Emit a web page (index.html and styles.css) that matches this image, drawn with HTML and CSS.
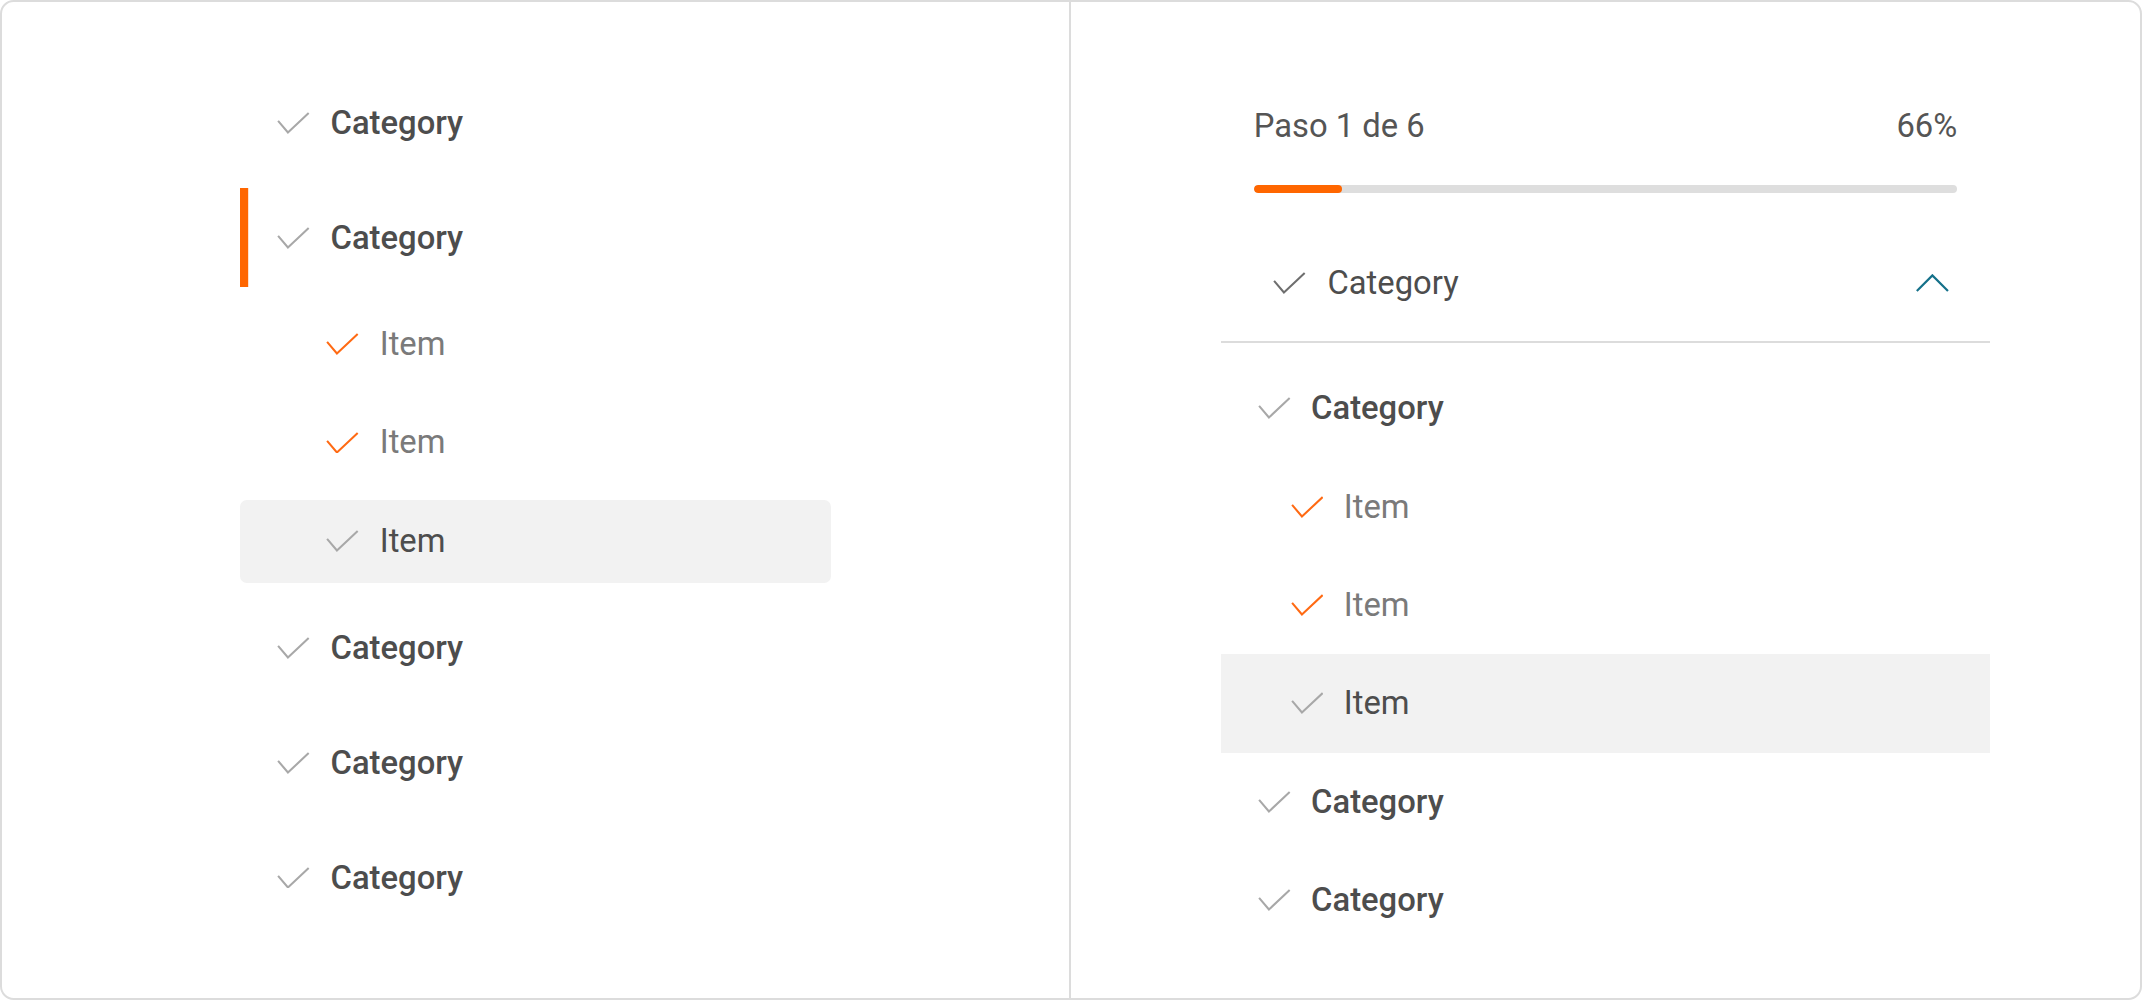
FILE: index.html
```html
<!DOCTYPE html>
<html lang="es">
<head>
<meta charset="utf-8">
<title>Navigation</title>
<link rel="stylesheet" href="styles.css">
</head>
<body>
<div class="frame">
  <section class="pane pane-left">
    <ul class="nav">
      <li class="row cat"><svg class="check" viewBox="0 0 24 16"><polyline points="0.8,6.5 8,15 23.2,0.8"/></svg><span>Category</span></li>
      <li class="row cat active"><svg class="check" viewBox="0 0 24 16"><polyline points="0.8,6.5 8,15 23.2,0.8"/></svg><span>Category</span></li>
      <li class="row item done"><svg class="check" viewBox="0 0 24 16"><polyline points="0.8,6.5 8,15 23.2,0.8"/></svg><span>Item</span></li>
      <li class="row item done"><svg class="check" viewBox="0 0 24 16"><polyline points="0.8,6.5 8,15 23.2,0.8"/></svg><span>Item</span></li>
      <li class="row item current"><svg class="check" viewBox="0 0 24 16"><polyline points="0.8,6.5 8,15 23.2,0.8"/></svg><span>Item</span></li>
      <li class="row cat"><svg class="check" viewBox="0 0 24 16"><polyline points="0.8,6.5 8,15 23.2,0.8"/></svg><span>Category</span></li>
      <li class="row cat"><svg class="check" viewBox="0 0 24 16"><polyline points="0.8,6.5 8,15 23.2,0.8"/></svg><span>Category</span></li>
      <li class="row cat"><svg class="check" viewBox="0 0 24 16"><polyline points="0.8,6.5 8,15 23.2,0.8"/></svg><span>Category</span></li>
    </ul>
  </section>
  <section class="pane pane-right">
    <div class="mobile">
      <div class="progress-head"><span>Paso 1 de 6</span><span>66%</span></div>
      <div class="bar"><div class="fill" style="width:12.6%"></div></div>
      <div class="acc-head">
        <svg class="check" viewBox="0 0 24 16"><polyline points="0.8,6.5 8,15 23.2,0.8"/></svg>
        <span class="acc-title">Category</span>
        <svg class="chevron" viewBox="0 0 24 13"><polyline points="0.6,12.4 12,1 23.4,12.4"/></svg>
      </div>
      <ul class="mnav">
        <li class="mrow cat"><svg class="check" viewBox="0 0 24 16"><polyline points="0.8,6.5 8,15 23.2,0.8"/></svg><span>Category</span></li>
        <li class="mrow item done"><svg class="check" viewBox="0 0 24 16"><polyline points="0.8,6.5 8,15 23.2,0.8"/></svg><span>Item</span></li>
        <li class="mrow item done"><svg class="check" viewBox="0 0 24 16"><polyline points="0.8,6.5 8,15 23.2,0.8"/></svg><span>Item</span></li>
        <li class="mrow item current"><svg class="check" viewBox="0 0 24 16"><polyline points="0.8,6.5 8,15 23.2,0.8"/></svg><span>Item</span></li>
        <li class="mrow cat"><svg class="check" viewBox="0 0 24 16"><polyline points="0.8,6.5 8,15 23.2,0.8"/></svg><span>Category</span></li>
        <li class="mrow cat"><svg class="check" viewBox="0 0 24 16"><polyline points="0.8,6.5 8,15 23.2,0.8"/></svg><span>Category</span></li>
      </ul>
    </div>
  </section>
</div>
</body>
</html>
```
FILE: styles.css
```css
html, body {
  margin: 0;
  padding: 0;
  background: #ffffff;
}

body {
  font-family: Roboto, "Noto Sans", "Liberation Sans", sans-serif;
  color: #4d4d4d;
}

.frame {
  zoom: 1.36607;
  box-sizing: border-box;
  width: 1568px;
  height: 732px;
  border: 1.5px solid #dcdcdc;
  border-radius: 10px;
  display: grid;
  grid-template-columns: 1fr 1fr;
  overflow: hidden;
}

.pane-left {
  border-right: 1.5px solid #dcdcdc;
  padding-top: 52.5px;
}

ul {
  list-style: none;
  margin: 0;
  padding: 0;
}

.nav {
  width: 432px;
  margin: 0 auto;
  display: flex;
  flex-direction: column;
  gap: 12px;
}

.row {
  display: flex;
  align-items: center;
  gap: 15px;
  font-size: 24px;
}

.row.cat {
  height: 72px;
  padding-left: 27px;
  font-weight: 500;
  color: #4d4d4d;
}

.row.cat.active {
  box-shadow: inset 6px 0 0 #ff6600;
}

.row.item {
  height: 60px;
  padding-left: 63px;
}

.row.item.current {
  height: 60.5px;
}

.check {
  width: 24px;
  height: 16px;
  flex: none;
  fill: none;
  stroke: #a8a8a8;
  stroke-width: 1.5;
}

.done .check {
  stroke: #ff6a13;
}

.done span {
  color: #7a7a7a;
}

.current span {
  color: #4d4d4d;
}

.row.current {
  background: #f2f2f2;
  border-radius: 5px;
}

.pane-right {
  padding-top: 77px;
}

.mobile {
  width: 563px;
  margin: 0 auto;
}

.progress-head {
  display: flex;
  justify-content: space-between;
  padding: 0 24px;
  font-size: 24px;
  line-height: 28px;
  color: #555555;
}

.bar {
  margin: 29px 24px 0;
  height: 6px;
  border-radius: 3px;
  background: #dedede;
  overflow: hidden;
}

.fill {
  height: 100%;
  border-radius: 3px;
  background: #ff6600;
}

.acc-head {
  margin-top: 23.5px;
  height: 84.5px;
  border-bottom: 1.5px solid #dcdcdc;
  display: flex;
  align-items: center;
  gap: 16px;
  padding: 0 30px 0 38px;
  font-size: 24px;
}

.acc-head .check {
  stroke: #6e6e6e;
}

.acc-title {
  flex: 1;
  color: #4d4d4d;
}

.chevron {
  width: 24px;
  height: 13px;
  fill: none;
  stroke: #15718a;
  stroke-width: 1.6;
}

.mnav {
  padding-top: 12px;
}

.mrow {
  height: 72px;
  display: flex;
  align-items: center;
  gap: 15px;
  font-size: 24px;
}

.mrow.cat {
  padding-left: 27px;
  font-weight: 500;
  color: #4d4d4d;
}

.mrow.item {
  padding-left: 51px;
}

.mrow.current {
  background: #f2f2f2;
}
```
